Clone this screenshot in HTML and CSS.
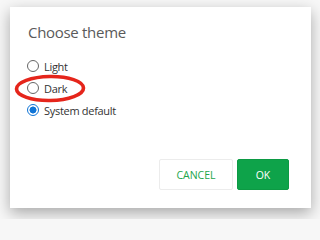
FILE: index.html
```html
<!DOCTYPE html>
<html>
<head>
<meta charset="utf-8">
<link rel="stylesheet" href="styles.css">
</head>
<body>
<div class="dialog">
  <h1 class="title">Choose theme</h1>
  <div class="options">
    <label class="option"><span class="radio"></span><span class="label">Light</span></label>
    <label class="option"><span class="radio"></span><span class="label">Dark</span></label>
    <label class="option"><span class="radio checked"></span><span class="label">System default</span></label>
  </div>
  <div class="actions">
    <button class="btn cancel">CANCEL</button>
    <button class="btn ok">OK</button>
  </div>
  <svg class="mark" width="72" height="29" viewBox="0 0 72 29">
    <ellipse cx="36" cy="14.5" rx="33.5" ry="12" fill="none" stroke="#e5251b" stroke-width="3.6" transform="rotate(-1 36 14.5)"/>
  </svg>
</div>
</body>
</html>
```
FILE: styles.css
```css
html, body {
  margin: 0;
  padding: 0;
}
body {
  background: #f7f7f7;
  width: 320px;
  height: 219px;
  overflow: hidden;
  padding: 7px 0 0 10px;
  box-sizing: border-box;
  font-family: "Open Sans", "Noto Sans", sans-serif;
}
.dialog {
  position: relative;
  width: 301px;
  height: 201px;
  box-sizing: border-box;
  background: #fff;
  box-shadow: 0 5px 14px rgba(0, 0, 0, 0.32);
  padding: 14px 22px 18px 18px;
  display: flex;
  flex-direction: column;
}
.title {
  margin: 0;
  font-size: 15px;
  line-height: 22px;
  font-weight: 400;
  color: #5a5a5a;
  letter-spacing: -0.3px;
}
.options {
  margin-top: 12px;
  display: flex;
  flex-direction: column;
}
.option {
  display: flex;
  align-items: center;
  height: 22px;
}
.radio {
  width: 10px;
  height: 10px;
  border: 1px solid #666;
  border-radius: 50%;
  box-sizing: content-box;
  margin-left: -1px;
  margin-right: 5px;
  flex: none;
}
.radio.checked {
  border-color: #0f74d6;
  background: radial-gradient(circle, #0f74d6 0 3.2px, #fff 3.8px);
}
.label {
  font-size: 11px;
  color: #333;
  letter-spacing: -0.3px;
}
.actions {
  margin-top: auto;
  display: flex;
  justify-content: flex-end;
  gap: 4px;
}
.btn {
  height: 31px;
  border-radius: 2px;
  font-family: "Open Sans", "Noto Sans", sans-serif;
  font-size: 10.5px;
  padding: 0;
  cursor: pointer;
}
.cancel {
  width: 74px;
  background: #fff;
  border: 1px solid #ececec;
  color: #22a54a;
}
.ok {
  width: 52px;
  background: #0ea34a;
  border: 1px solid #0c9a44;
  color: #fff;
}
.mark {
  position: absolute;
  left: 4px;
  top: 67px;
}
```
